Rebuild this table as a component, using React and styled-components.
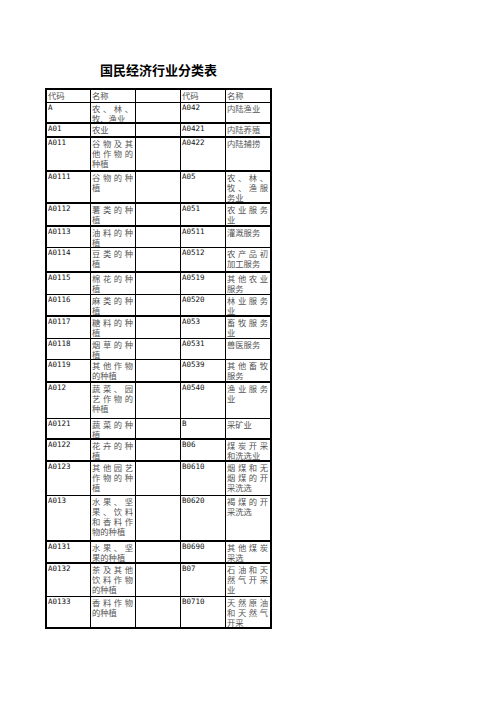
import React from "react";
import styled, { createGlobalStyle } from "styled-components";

const Global = createGlobalStyle`
  html, body { margin: 0; padding: 0; background: #fff; }
  body { width: 496px; min-height: 702px; }
  * { box-sizing: border-box; }
`;

const Page = styled.div`
  width: 496px;
  min-height: 702px;
  padding: 62px 0 0 45px;
  background: #fff;
`;

const Sheet = styled.div`
  width: 227px;
  display: flex;
  flex-direction: column;
`;

const Title = styled.h1`
  margin: 0 0 11px;
  font-family: "Noto Sans CJK SC", "Noto Sans", sans-serif;
  font-size: 13px;
  line-height: 15px;
  font-weight: 700;
  color: #000;
  text-align: center;
  letter-spacing: 0;
`;

const Table = styled.div`
  border: 2px solid #000;
  display: flex;
  flex-direction: column;
`;

const Row = styled.div`
  display: grid;
  grid-template-columns: 44px 45px 45px 45px 1fr;
  height: ${(p) => p.$h}px;
  border-bottom: ${(p) => (p.$last ? 0 : p.$thick ? 2 : 1)}px solid #000;
`;

const Cell = styled.div`
  overflow: hidden;
  border-right: 1px solid #000;
  padding: ${(p) => (p.$kind === "code" ? "0 1px" : "0 2px 0 1px")};
  font-family: ${(p) =>
    p.$kind === "code"
      ? '"DejaVu Sans Mono", "Liberation Mono", monospace'
      : '"Noto Sans CJK SC", "Noto Sans", sans-serif'};
  font-size: ${(p) => (p.$kind === "code" ? "7.5px" : "8.3px")};
  line-height: 10px;
  color: ${(p) => (p.$kind === "code" ? "#111" : "#555")};
  text-align: ${(p) => (p.$kind === "name" ? "justify" : "left")};
  text-justify: inter-character;
  word-break: break-all;
  &:last-child {
    border-right: 0;
  }
`;

const rows = [
  ["代码", "名称", "代码", "名称", 13, false, true],
  ["A", "农、林、牧、渔业", "A042", "内陆渔业", 21, true],
  ["A01", "农业", "A0421", "内陆养殖", 14, true],
  ["A011", "谷物及其他作物的种植", "A0422", "内陆捕捞", 34, true],
  ["A0111", "谷物的种植", "A05", "农、林、牧、渔服务业", 32, true],
  ["A0112", "薯类的种植", "A051", "农业服务业", 23, true],
  ["A0113", "油料的种植", "A0511", "灌溉服务", 21, false],
  ["A0114", "豆类的种植", "A0512", "农产品初加工服务", 25, true],
  ["A0115", "棉花的种植", "A0519", "其他农业服务", 22, false],
  ["A0116", "麻类的种植", "A0520", "林业服务业", 22, true],
  ["A0117", "糖料的种植", "A053", "畜牧服务业", 22, false],
  ["A0118", "烟草的种植", "A0531", "兽医服务", 21, false],
  ["A0119", "其他作物的种植", "A0539", "其他畜牧服务", 23, true],
  ["A012", "蔬菜、园艺作物的种植", "A0540", "渔业服务业", 36, false],
  ["A0121", "蔬菜的种植", "B", "采矿业", 21, true],
  ["A0122", "花卉的种植", "B06", "煤炭开采和洗选业", 22, true],
  ["A0123", "其他园艺作物的种植", "B0610", "烟煤和无烟煤的开采洗选", 34, false],
  ["A013", "水果、坚果、饮料和香料作物的种植", "B0620", "褐煤的开采洗选", 46, true],
  ["A0131", "水果、坚果的种植", "B0690", "其他煤炭采选", 22, true],
  ["A0132", "茶及其他饮料作物的种植", "B07", "石油和天然气开采业", 33, false],
  ["A0133", "香料作物的种植", "B0710", "天然原油和天然气开采", 30, false],
];

export default function App() {
  return (
    <Page>
      <Global />
      <Sheet>
        <Title>国民经济行业分类表</Title>
        <Table>
          {rows.map(([c1, n1, c2, n2, h, thick, header], i) => (
            <Row key={i} $h={h} $thick={thick} $last={i === rows.length - 1}>
              <Cell $kind={header ? "head" : "code"}>{c1}</Cell>
              <Cell $kind="name">{n1}</Cell>
              <Cell $kind="blank" />
              <Cell $kind={header ? "head" : "code"}>{c2}</Cell>
              <Cell $kind="name">{n2}</Cell>
            </Row>
          ))}
        </Table>
      </Sheet>
    </Page>
  );
}
